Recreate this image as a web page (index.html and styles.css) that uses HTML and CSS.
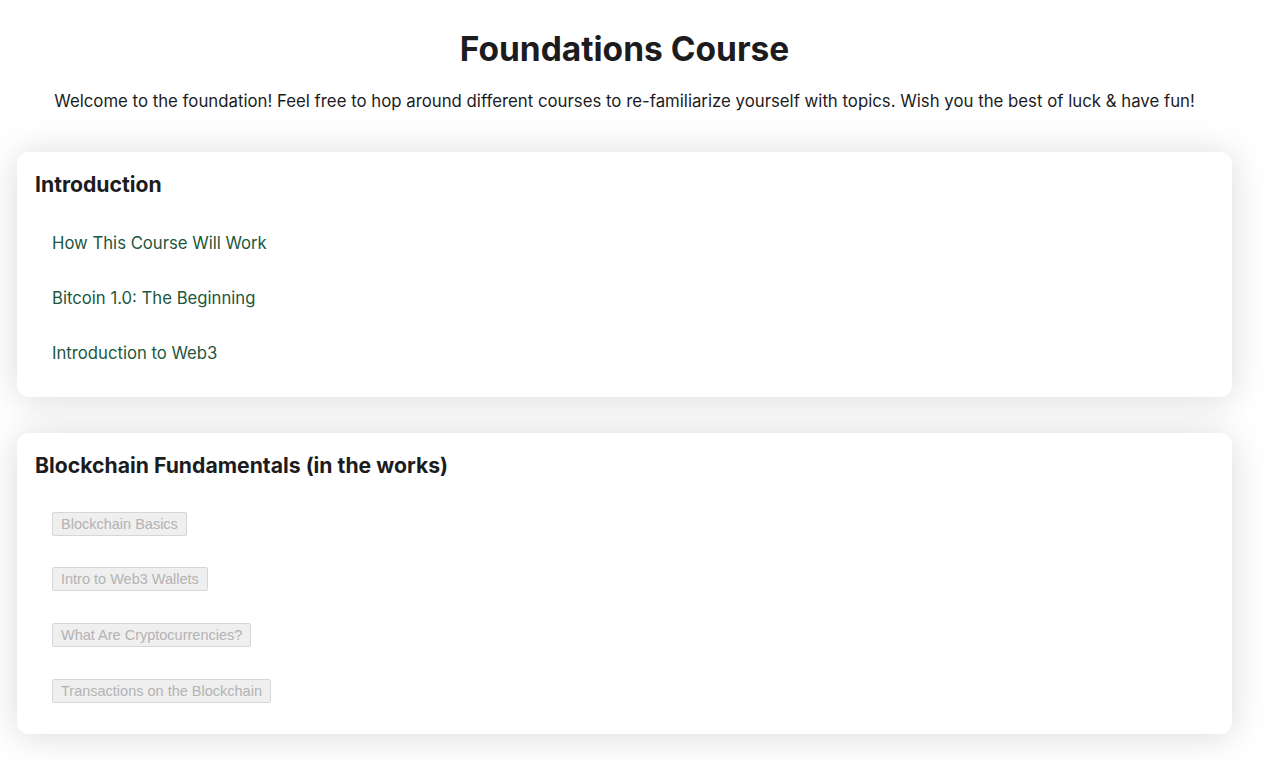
FILE: index.html
```html
<!DOCTYPE html>
<html lang="en">
<head>
  <meta charset="UTF-8" />
  <title>Foundations Course</title>
  <link rel="stylesheet" href="styles.css">
</head>
<body>
  <main class="page">
    <h1 class="titulo">Foundations Course</h1>
    <p class="intro">Welcome to the foundation! Feel free to hop around different courses to re-familiarize yourself with topics. Wish you the best of luck &amp; have fun!</p>

    <!-- Introduction -->
    <section class="card">
      <h2>Introduction</h2>
      <ul class="lessons">
        <li><a href="#">How This Course Will Work</a></li>
        <li><a href="#">Bitcoin 1.0: The Beginning</a></li>
        <li><a href="#">Introduction to Web3</a></li>
      </ul>
    </section>

    <!-- Blockchain -->
    <section class="card">
      <h2>Blockchain Fundamentals (in the works)</h2>
      <ul class="lessons pending">
        <li><button disabled>Blockchain Basics</button></li>
        <li><button disabled>Intro to Web3 Wallets</button></li>
        <li><button disabled>What Are Cryptocurrencies?</button></li>
        <li><button disabled>Transactions on the Blockchain</button></li>
      </ul>
    </section>
  </main>
</body>
</html>
```

FILE: styles.css
```css
body {
  font-family: Inter, "Noto Sans", sans-serif;
  color: #1c1c1e;
  background: #fff;
  margin: 0;
}

.page {
  width: 1215px;
  margin-left: 17px;
  padding-bottom: 40px;
}

.titulo {
  font-size: 33.5px;
  font-weight: 700;
  text-align: center;
  margin: 29px 0 0;
}

.intro {
  font-size: 16.8px;
  text-align: center;
  margin: 22px 0 41px;
}

.card {
  background: #fff;
  border-radius: 12px;
  box-shadow: 0 2px 36px rgba(0,0,0,0.15);
  padding: 19px 18px 17px;
  margin-bottom: 36px;
}

.card:last-child {
  margin-bottom: 0;
  padding-bottom: 15.5px;
}

.card h2 {
  font-size: 21.2px;
  font-weight: 700;
  margin: 0 0 18px;
}

.lessons {
  list-style: none;
  margin: 0;
  padding: 0 0 0 17px;
}

.lessons li {
  height: 55px;
  display: flex;
  align-items: center;
}

.pending li {
  height: 55.6px;
}

.lessons a {
  color: #1d5740;
  text-decoration: none;
  font-size: 16.7px;
}

.lessons button {
  font-family: "Liberation Sans", Arial, sans-serif;
  font-size: 14.5px;
  color: #b3b3b3;
  background: #efefef;
  border: 1px solid #d6d6d6;
  border-radius: 2px;
  padding: 3px 8px;
}
```
